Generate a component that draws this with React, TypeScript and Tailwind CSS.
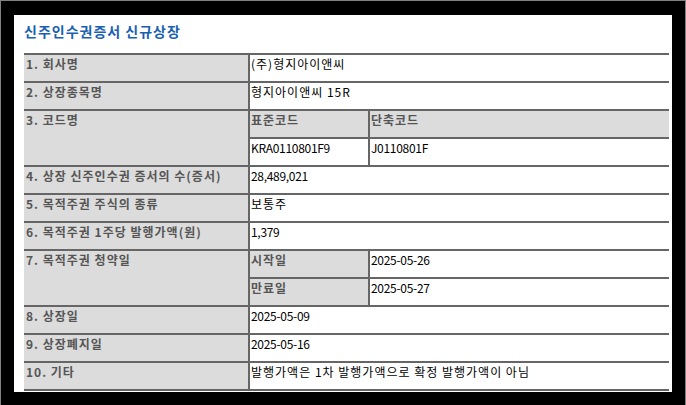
const font = { fontFamily: '"Noto Sans CJK KR", "Noto Sans", sans-serif' };

const line = "border-[#666666]";

function Label({ children, tall }: { children: React.ReactNode; tall?: boolean }) {
  return (
    <div
      className={`w-[224px] shrink-0 bg-[#dcdcdc] border-b-2 ${line} pl-[2px] pt-[1px] text-[12px] leading-[16px] tracking-[1px] font-bold text-[#555555] ${
        tall ? "h-[56px]" : "h-[28px]"
      }`}
    >
      {children}
    </div>
  );
}

function Value({ children, wide }: { children: React.ReactNode; wide?: boolean }) {
  return (
    <div
      className={`flex-1 h-[28px] border-b-2 ${line} pl-[1px] pt-[1px] text-[12px] leading-[16px] text-black ${
        wide ? "tracking-[1px]" : "tracking-[-0.3px]"
      }`}
    >
      {children}
    </div>
  );
}

function Row({ label, value, wide }: { label: string; value: string; wide?: boolean }) {
  return (
    <div className="flex">
      <Label>{label}</Label>
      <div className={`flex-1 flex border-l-2 ${line}`}>
        <Value wide={wide}>{value}</Value>
      </div>
    </div>
  );
}

const subHead = `h-[28px] bg-[#dcdcdc] border-b-2 ${line} pl-[1px] pt-[1px] text-[12px] leading-[16px] tracking-[1px] font-bold text-[#555555]`;
const subVal = `h-[28px] border-b-2 ${line} pl-[1px] pt-[1px] text-[12px] leading-[16px] tracking-[-0.3px] text-black`;

function SplitRow({ label, rows, headerRow }: { label: string; rows: [string, string][]; headerRow?: boolean }) {
  return (
    <div className="flex">
      <Label tall>{label}</Label>
      <div className={`flex-1 flex flex-col border-l-2 ${line}`}>
        {headerRow ? (
          <>
            <div className="flex">
              <div className={`w-[118px] ${subHead}`}>{rows[0][0]}</div>
              <div className={`flex-1 border-l-2 ${subHead}`}>{rows[0][1]}</div>
            </div>
            <div className="flex">
              <div className={`w-[118px] ${subVal}`}>{rows[1][0]}</div>
              <div className={`flex-1 border-l-2 ${subVal}`}>{rows[1][1]}</div>
            </div>
          </>
        ) : (
          rows.map(([k, v]) => (
            <div className="flex" key={k}>
              <div className={`w-[118px] ${subHead}`}>{k}</div>
              <div className={`flex-1 border-l-2 ${subVal}`}>{v}</div>
            </div>
          ))
        )}
      </div>
    </div>
  );
}

export default function App() {
  return (
    <div
      className="w-[686px] h-[405px] bg-black border-t border-l border-r border-[#808080] pl-[13px] pt-[14px] overflow-hidden"
      style={font}
    >
      <div className="w-[658px] h-[377px] bg-white pl-[10px] pt-[6px]">
        <div className="h-[20px] leading-[20px] text-[14px] tracking-[1px] font-bold text-[#1a5fb0] mb-[12px]">
          신주인수권증서 신규상장
        </div>
        <div className={`w-[645px] border-t-2 ${line}`}>
          <Row label="1. 회사명" value="(주)형지아이앤씨" wide />
          <Row label="2. 상장종목명" value="형지아이앤씨 15R" wide />
          <SplitRow
            label="3. 코드명"
            headerRow
            rows={[
              ["표준코드", "단축코드"],
              ["KRA0110801F9", "J0110801F"],
            ]}
          />
          <Row label="4. 상장 신주인수권 증서의 수(증서)" value="28,489,021" />
          <Row label="5. 목적주권 주식의 종류" value="보통주" wide />
          <Row label="6. 목적주권 1주당 발행가액(원)" value="1,379" />
          <SplitRow
            label="7. 목적주권 청약일"
            rows={[
              ["시작일", "2025-05-26"],
              ["만료일", "2025-05-27"],
            ]}
          />
          <Row label="8. 상장일" value="2025-05-09" />
          <Row label="9. 상장폐지일" value="2025-05-16" />
          <Row label="10. 기타" value="발행가액은 1차 발행가액으로 확정 발행가액이 아님" wide />
        </div>
      </div>
    </div>
  );
}
